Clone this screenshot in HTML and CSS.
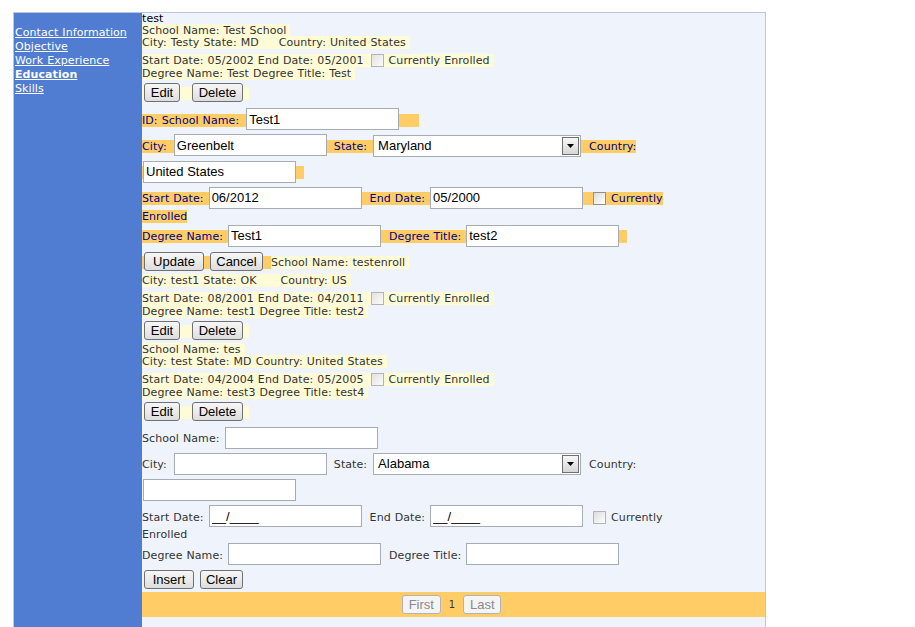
FILE: index.html
```html
<!DOCTYPE html>
<html>
<head>
<meta charset="utf-8">
<title>Education</title>
<link rel="stylesheet" href="styles.css">
</head>
<body>
<div class="frame">
  <nav class="side">
    <a href="#">Contact Information</a>
    <a href="#">Objective</a>
    <a href="#">Work Experience</a>
    <a href="#" class="current">Education</a>
    <a href="#">Skills</a>
  </nav>
  <main class="main">
    <div class="list">test<br><span class="item">School Name: Test School&nbsp;<br>City: Testy State: MD&nbsp;&nbsp;&nbsp;&nbsp; Country: United States&nbsp;<br>Start Date: 05/2002 End Date: 05/2001 <input type="checkbox" class="cb cb-view" disabled> Currently Enrolled&nbsp;<br>Degree Name: Test Degree Title: Test&nbsp;<br><button class="btn b-edit">Edit</button>&nbsp; <button class="btn b-delete">Delete</button>&nbsp;<br></span><span class="edit">ID: School Name: <input class="tb tb-id" value="Test1">&nbsp;&nbsp;&nbsp;&nbsp;<br>City: <input class="tb tb-city" value="Greenbelt"> State: <span class="sel"><span class="sel-text">Maryland</span><span class="arr"><svg width="7" height="4" viewBox="0 0 7 4"><path d="M0 0h7L3.5 4z" fill="#000"/></svg></span></span> Country: <input class="tb" value="United States">&nbsp;<br>Start Date: <input class="tb" value="06/2012"> End Date: <input class="tb" value="05/2000"> <input type="checkbox" class="cb cb-edit"> Currently Enrolled<br>Degree Name: <input class="tb" value="Test1"> Degree Title: <input class="tb" value="test2">&nbsp;<br><button class="btn b-update">Update</button> <button class="btn b-cancel">Cancel</button>&nbsp; </span><span class="item">School Name: testenroll&nbsp;<br>City: test1 State: OK&nbsp;&nbsp;&nbsp;&nbsp;&nbsp; Country: US&nbsp;<br>Start Date: 08/2001 End Date: 04/2011 <input type="checkbox" class="cb cb-view" disabled> Currently Enrolled&nbsp;<br>Degree Name: test1 Degree Title: test2&nbsp;<br><button class="btn b-edit">Edit</button>&nbsp; <button class="btn b-delete">Delete</button>&nbsp;<br></span><span class="item">School Name: tes&nbsp;<br>City: test State: MD Country: United States&nbsp;<br>Start Date: 04/2004 End Date: 05/2005 <input type="checkbox" class="cb cb-view" disabled> Currently Enrolled&nbsp;<br>Degree Name: test3 Degree Title: test4&nbsp;<br><button class="btn b-edit">Edit</button>&nbsp; <button class="btn b-delete">Delete</button>&nbsp;<br></span><span class="insert">School Name: <input class="tb" value=""><br>City: <input class="tb tb-city" value=""> State: <span class="sel"><span class="sel-text">Alabama</span><span class="arr"><svg width="7" height="4" viewBox="0 0 7 4"><path d="M0 0h7L3.5 4z" fill="#000"/></svg></span></span> Country: <input class="tb" value=""><br>Start Date: <input class="tb" value="__/____"> End Date: <input class="tb" value="__/____"> <input type="checkbox" class="cb cb-edit cb-ins"> Currently Enrolled<br>Degree Name: <input class="tb" value=""> Degree Title: <input class="tb" value=""><br><button class="btn b-insert">Insert</button> <button class="btn b-clear">Clear</button></span></div>
    <div class="pager">
      <button class="btn pg pg-first" disabled>First</button>
      <span class="pg-num">1</span>
      <button class="btn pg pg-last" disabled>Last</button>
    </div>
  </main>
</div>
</body>
</html>
```

FILE: styles.css
```css
* { box-sizing: border-box; }
html, body { margin: 0; padding: 0; background: #fff; }
body {
  font-family: "DejaVu Sans", Verdana, sans-serif;
  font-size: 11px;
  letter-spacing: 0.08px;
  word-spacing: 0.4px;
}
.frame {
  display: flex;
  margin: 12px 0 0 13px;
  width: 753px;
  min-height: 620px;
  border: 1px solid #b7c7e0;
  border-bottom: none;
}
.side {
  width: 128px;
  flex: none;
  background: #507cd1;
  padding: 13px 0 0 1px;
  display: flex;
  flex-direction: column;
  align-items: flex-start;
  line-height: 14px;
}
.side a { color: #fff; text-decoration: underline; }
.side a.current { font-weight: bold; }
.main {
  flex: 1;
  background: #eff3fb;
  display: flex;
  flex-direction: column;
}
.list {
  width: 540px;
  line-height: 12px;
  color: #000;
}
.item { background: #fffbd6; color: #333; }
.edit { background: #ffcc66; color: #000080; }
.insert { color: #333; }

.tb {
  width: 153px;
  height: 22px;
  margin: 2px 4px 2px 1px;
  padding: 0 2px;
  border: 1px solid #a5acb2;
  background: #fff;
  font-family: "Liberation Sans", Arial, sans-serif;
  font-size: 13px;
  letter-spacing: 0;
  word-spacing: 0;
  color: #000;
  vertical-align: baseline;
}
.tb-id { margin-left: 3px; }
.tb-city { margin-left: 3px; margin-right: 3px; }

.sel {
  display: inline-flex;
  align-items: center;
  justify-content: space-between;
  width: 208px;
  height: 22px;
  margin: 2px 4px 2px 2px;
  padding: 1px 1px 1px 4px;
  border: 1px solid #a5acb2;
  background: #fff;
  font-family: "Liberation Sans", Arial, sans-serif;
  font-size: 13px;
  letter-spacing: 0;
  word-spacing: 0;
  color: #000;
  vertical-align: baseline;
}
.arr {
  width: 17px;
  height: 18px;
  display: flex;
  align-items: center;
  justify-content: center;
  border: 1px solid #6f6f6f;
  background: linear-gradient(#f7f7f7, #d6d6d6);
}

.cb {
  appearance: none;
  -webkit-appearance: none;
  width: 13px;
  height: 13px;
  margin: 5px 1px 1px 3px;
  vertical-align: -4px;
  border: 1px solid #b4b4b4;
  background: linear-gradient(135deg, #e2e2e2, #fbfbfb);
}
.cb-edit {
  margin: 5px 1px 0 2px;
  vertical-align: -3px;
  border-color: #8e8f8f;
  background: linear-gradient(135deg, #dcdcdc, #ffffff);
}
.cb-ins { border-color: #b4b4b4; }

.btn {
  height: 19px;
  margin: 3px 0 4px 2px;
  padding: 0 5px;
  border: 1px solid #707070;
  border-radius: 3px;
  background: linear-gradient(#f6f6f6 0%, #ebebeb 50%, #dddddd 100%);
  font-family: "Liberation Sans", Arial, sans-serif;
  font-size: 13px;
  letter-spacing: 0;
  word-spacing: 0;
  color: #000;
  line-height: 15px;
  vertical-align: baseline;
}
.b-edit { width: 36px; margin-right: 2px; }
.b-delete { width: 51px; margin-right: 2px; }
.b-update { width: 60px; }
.b-cancel { width: 53px; }
.b-insert { width: 50px; margin-bottom: 3px; }
.b-clear { width: 43px; margin-bottom: 3px; }

.pager {
  height: 25px;
  padding-right: 4px;
  background: #ffcc66;
  display: flex;
  align-items: center;
  justify-content: center;
  gap: 8px;
}
.pg {
  margin: 0;
  height: 19px;
  color: #8a8a8a;
  border-color: #b0b4b8;
  background: #f4f4f4;
}
.pg-first { width: 39px; }
.pg-last { width: 38px; }
.pg-num { color: #333; font-size: 10px; }
```
